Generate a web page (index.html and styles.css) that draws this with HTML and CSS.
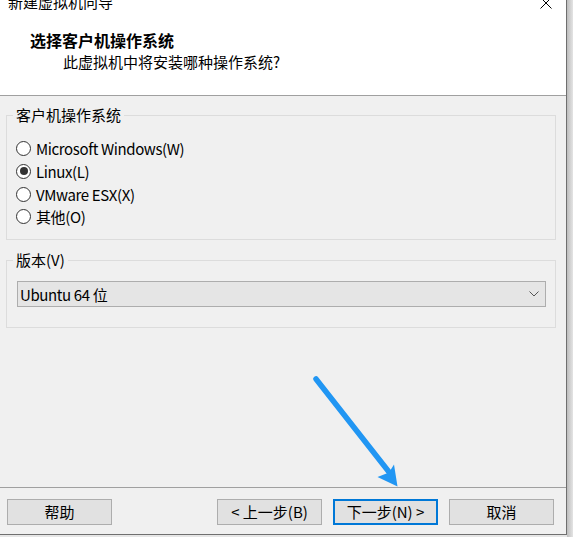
FILE: index.html
```html
<!DOCTYPE html>
<html lang="zh-CN">
<head>
<meta charset="utf-8">
<title>新建虚拟机向导</title>
<link rel="stylesheet" href="styles.css">
</head>
<body>
<div class="screen">
  <div class="dialog">
    <div class="header">
      <div class="titlebar">
        <span class="title">新建虚拟机向导</span>
        <svg class="close" width="12" height="12" viewBox="0 0 12 12"><path d="M0.5 0.5 L11.5 11.5 M11.5 0.5 L0.5 11.5" stroke="#000" stroke-width="1"/></svg>
      </div>
      <div class="heading">选择客户机操作系统</div>
      <div class="subheading">此虚拟机中将安装哪种操作系统?</div>
    </div>
    <div class="content">
      <fieldset class="group group-os">
        <legend>客户机操作系统</legend>
        <div class="radio"><span class="dot"></span><span class="lbl">Microsoft Windows(W)</span></div>
        <div class="radio"><span class="dot checked"></span><span class="lbl">Linux(L)</span></div>
        <div class="radio"><span class="dot"></span><span class="lbl">VMware ESX(X)</span></div>
        <div class="radio"><span class="dot"></span><span class="lbl">其他(O)</span></div>
      </fieldset>
      <fieldset class="group group-ver">
        <legend>版本(V)</legend>
        <div class="select">
          <span class="lbl">Ubuntu 64 位</span>
          <svg width="10" height="6" viewBox="0 0 10 6"><path d="M0.5 0.5 L5 5 L9.5 0.5" fill="none" stroke="#555" stroke-width="1"/></svg>
        </div>
      </fieldset>
    </div>
    <div class="footer">
      <button class="btn">帮助</button>
      <div class="spacer"></div>
      <button class="btn">&lt; 上一步(B)</button>
      <button class="btn default">下一步(N) &gt;</button>
      <button class="btn">取消</button>
    </div>
  </div>
  <div class="side"></div>
  <svg class="arrow" width="573" height="537" viewBox="0 0 573 537">
    <line x1="316" y1="379" x2="389" y2="472" stroke="#2196f3" stroke-width="5.5" stroke-linecap="round"/>
    <polygon points="397.5,486.5 377.5,477 389,472.5 394,464.5" fill="#2196f3"/>
  </svg>
</div>
</body>
</html>
```

FILE: styles.css
```css
* { box-sizing: border-box; }
html, body { margin: 0; padding: 0; }
body {
  width: 573px;
  height: 537px;
  overflow: hidden;
  font-family: "Noto Sans CJK SC", "Noto Sans", sans-serif;
  font-size: 15px;
  color: #000;
  background: #e6e6e6;
}
.screen {
  position: relative;
  display: flex;
  width: 573px;
  height: 537px;
}
.dialog {
  width: 567px;
  height: 535px;
  display: flex;
  flex-direction: column;
  background: #f0f0f0;
  border-right: 1px solid #6f6f6f;
  border-bottom: 1px solid #6f6f6f;
}
.side {
  flex: 1;
  background: linear-gradient(to right, #bdbdbd, #e4e4e4);
}
.header {
  height: 96px;
  background: #fff;
  border-bottom: 1px solid #a0a0a0;
}
.titlebar {
  display: flex;
  justify-content: space-between;
  align-items: center;
  height: 17px;
  margin-top: -7px;
  line-height: 17px;
  padding-left: 8px;
  padding-right: 14px;
}
.close { margin-top: 3px; }
.heading {
  margin-top: 20px;
  padding-left: 30px;
  line-height: 20px;
  font-weight: bold;
  font-size: 16px;
}
.subheading {
  margin-top: 2px;
  padding-left: 63px;
  line-height: 20px;
}
.content {
  flex: 1;
  border-bottom: 1px solid #a0a0a0;
}
.group {
  margin: 0 10px 0 6px;
  border: 1px solid #dcdcdc;
  min-width: 0;
}
.group legend {
  padding: 0 3px;
  line-height: 20px;
}
.group-os {
  margin-top: 9px;
  padding: 12.5px 6px 11px 6px;
}
.group-ver {
  margin-top: 10px;
  padding: 11px 9px 20px 6px;
}
.radio {
  display: flex;
  align-items: center;
  height: 22.67px;
  margin-left: 3px;
  gap: 5px;
}
.lbl { letter-spacing: -0.38px; }
.dot {
  flex: none;
  width: 15px;
  height: 15px;
  border-radius: 50%;
  border: 1px solid #333;
  background: #fff;
  display: flex;
  align-items: center;
  justify-content: center;
}
.dot.checked::after {
  content: "";
  width: 8px;
  height: 8px;
  border-radius: 50%;
  background: #333;
}
.select {
  margin-left: 4px;
  height: 26px;
  display: flex;
  align-items: center;
  justify-content: space-between;
  padding: 0 6px 0 2px;
  background: #e5e5e5;
  border: 1px solid #adadad;
}
.footer {
  display: flex;
  padding: 11px 12px 9px 7px;
  gap: 11px;
}
.spacer { flex: 1; }
.btn {
  width: 105px;
  height: 26px;
  padding: 0;
  font: inherit;
  color: #000;
  background: #e1e1e1;
  border: 1px solid #adadad;
  line-height: 22px;
}
.btn.default {
  border: 2px solid #0078d7;
}
.arrow {
  position: absolute;
  left: 0;
  top: 0;
  pointer-events: none;
}
```
